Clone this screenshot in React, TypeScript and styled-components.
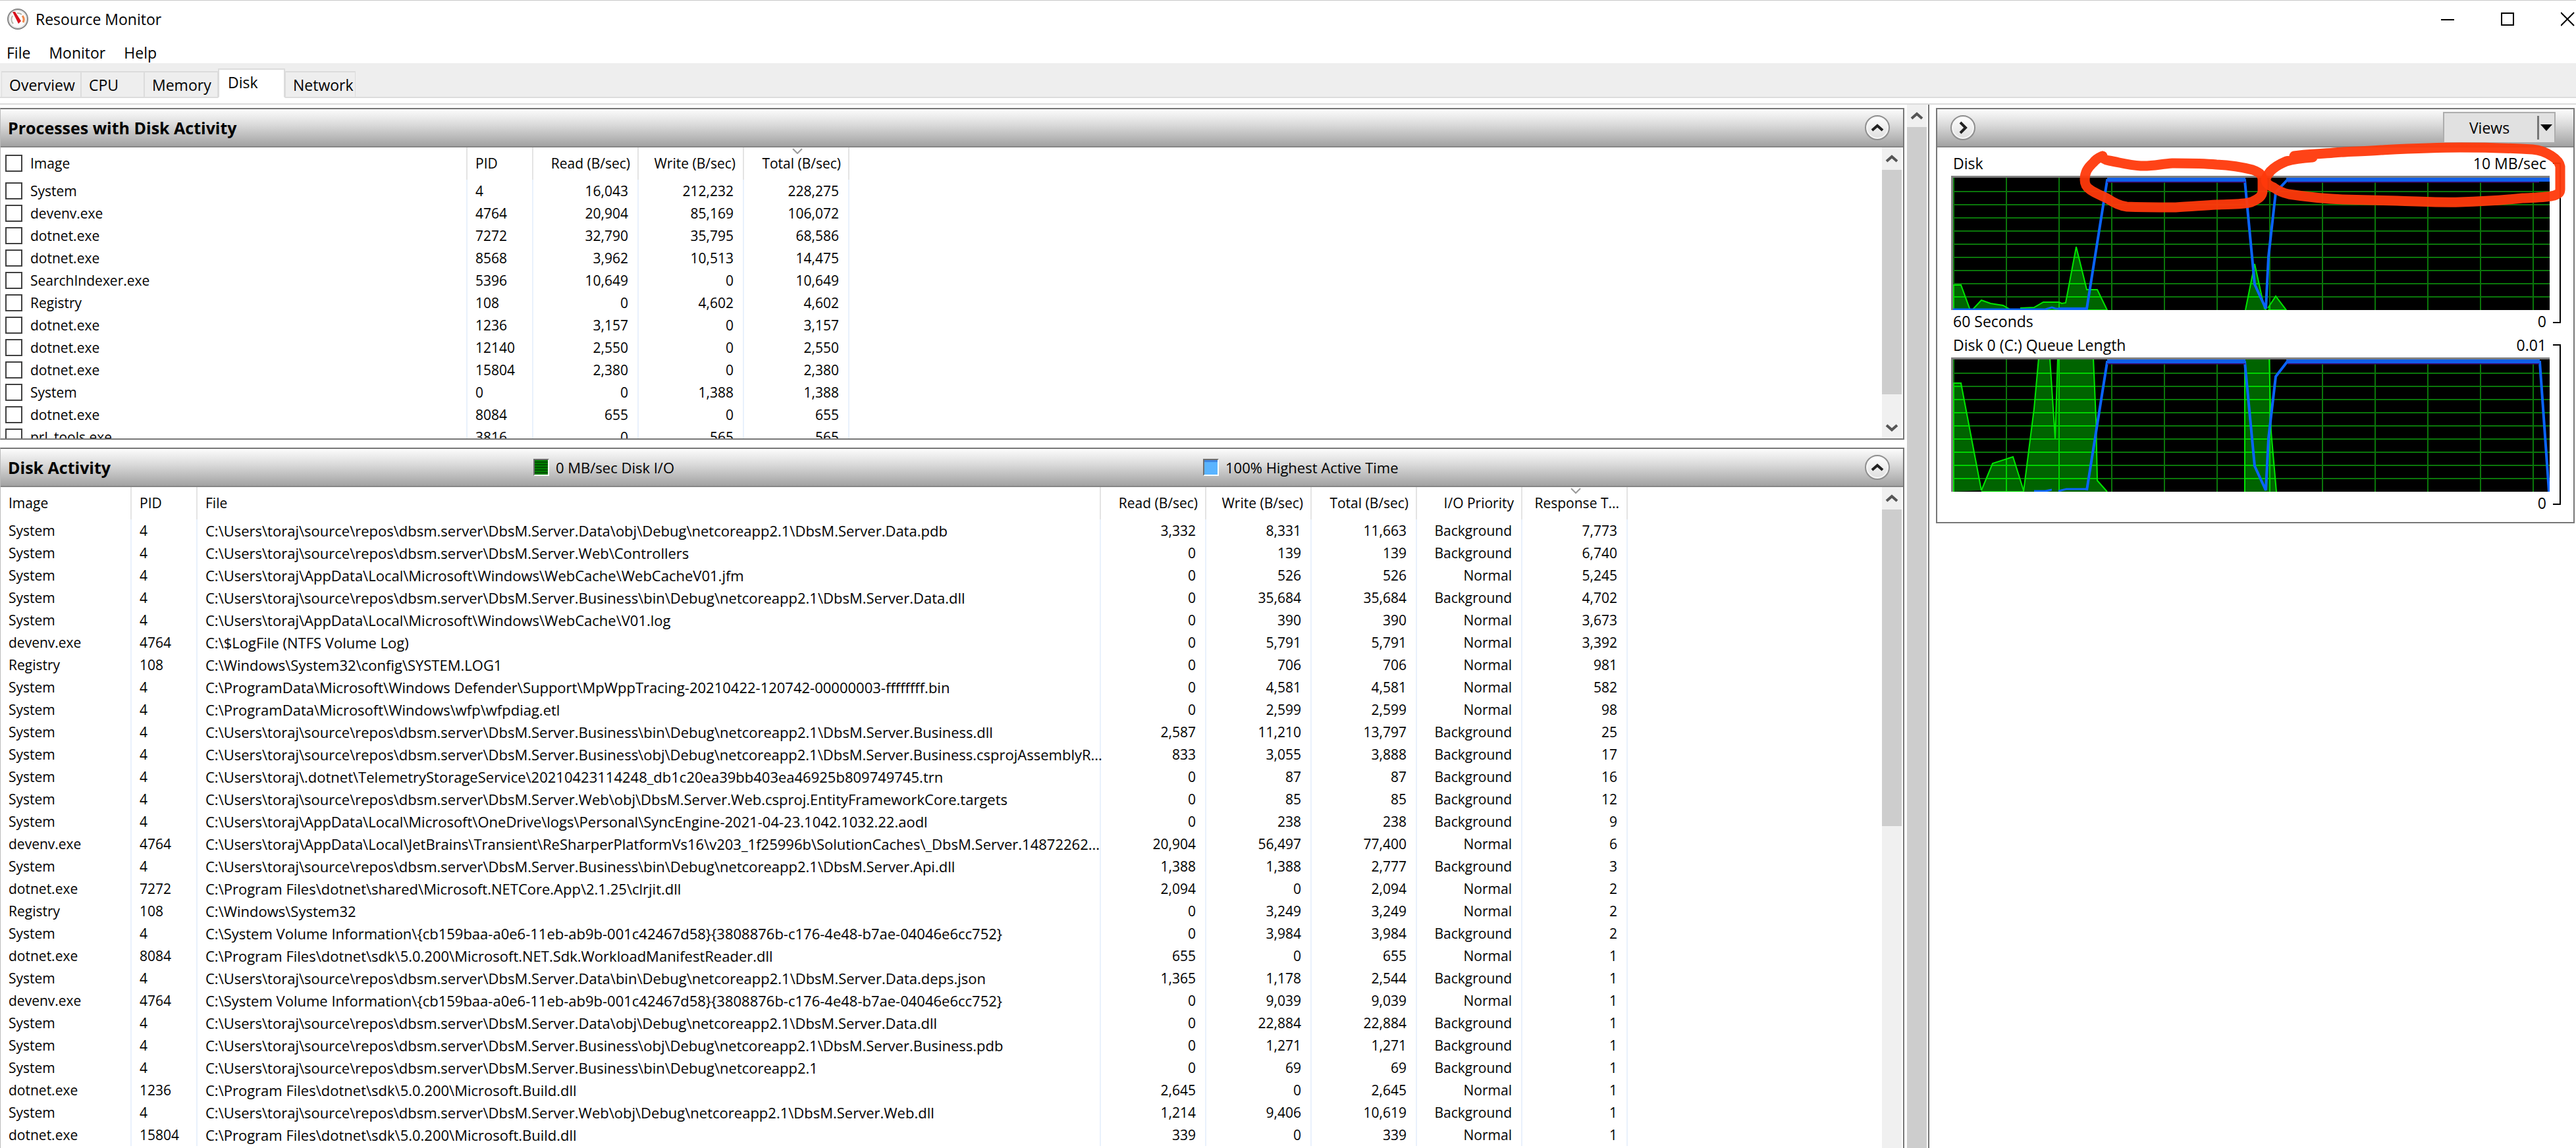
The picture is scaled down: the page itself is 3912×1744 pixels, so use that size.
import React from "react";
import styled, { createGlobalStyle } from "styled-components";

const GlobalStyle = createGlobalStyle`
  *, *::before, *::after { box-sizing: border-box; }
  body {
    margin: 0;
    background: #fff;
    color: #000;
    font-family: "Segoe UI", "Open Sans", "Noto Sans", sans-serif;
    font-size: 21px;
  }
  button { font: inherit; color: inherit; padding: 0; border: 0; background: none; }
`;

const Window = styled.div`
  display: flex;
  flex-direction: column;
  height: 100vh;
  overflow: hidden;
  border-top: 1px solid #c8c8c8;
`;

const TitleBar = styled.header`
  display: flex;
  align-items: center;
  height: 56px;
  padding: 0 2px 0 10px;
`;

const Title = styled.h1`
  flex: 1;
  margin: 0 0 0 10px;
  font-size: 23px;
  line-height: 32px;
  font-weight: 400;
`;

const WindowControls = styled.div`
  display: flex;
  gap: 70px;
`;

const ControlButton = styled.button`
  display: flex;
  width: 21px;
  height: 22px;
`;

const MenuBar = styled.nav`
  display: flex;
  gap: 28px;
  height: 39px;
  padding: 6px 10px 0;
  font-size: 23px;
  line-height: 32px;
`;

const MenuButton = styled.button`
  line-height: 32px;
`;

const TabStrip = styled.div`
  display: flex;
  align-items: flex-end;
  height: 53px;
  padding-left: 2px;
  background: #eee;
  box-shadow: inset 0 -2px #dcdcdc;
`;

const Tab = styled.button<{ $width: number; $active?: boolean }>`
  width: ${(p) => p.$width}px;
  height: ${(p) => (p.$active ? 45 : 41)}px;
  padding: ${(p) => (p.$active ? "0 0 4px 13px" : "0 0 0 11px")};
  border: 2px solid #dcdcdc;
  border-left-width: ${(p) => (p.$active ? 2 : 1)}px;
  border-right-width: ${(p) => (p.$active ? 2 : 1)}px;
  border-bottom-color: ${(p) => (p.$active ? "#fff" : "#dcdcdc")};
  background: ${(p) => (p.$active ? "#fff" : "#eee")};
  font-size: 23px;
  line-height: 32px;
  text-align: left;
  white-space: nowrap;
`;

const TabRule = styled.div`
  height: 10px;
  flex: none;
  border-bottom: 2px solid #dcdcdc;
`;

const Workspace = styled.main`
  flex: 1;
  display: flex;
  min-height: 0;
`;

const Panels = styled.div`
  flex: 1;
  min-width: 0;
  display: flex;
  flex-direction: column;
  gap: 12px;
  padding: 5px 4px 0 0;
`;

const Panel = styled.section<{ $grow?: boolean }>`
  display: flex;
  flex-direction: column;
  flex: ${(p) => (p.$grow ? "1 0 0" : "0 0 504px")};
  min-height: 0;
  border: 2px solid #777;
  border-left: 1px solid #bbb;
  border-bottom-width: ${(p) => (p.$grow ? 0 : 2)}px;
`;

const PanelHeader = styled.header`
  display: flex;
  align-items: center;
  flex: none;
  height: 58px;
  border-bottom: 2px solid #868686;
  background: linear-gradient(#fcfcfc, #dcdcdc 40%, #a2a2a2);
`;

const PanelTitle = styled.h2`
  flex: none;
  width: 809px;
  margin: 0;
  padding-left: 11px;
  font-size: 25px;
  line-height: 32px;
  font-weight: 700;
`;

const Legend = styled.span<{ $wide?: boolean }>`
  display: flex;
  align-items: center;
  flex: none;
  gap: 10px;
  width: ${(p) => (p.$wide ? "1017px" : "auto")};
  font-size: 22px;
  line-height: 32px;
`;

const Swatch = styled.span<{ $kind: "io" | "active" }>`
  width: 24px;
  height: 26px;
  border: 2px solid;
  border-color: #6e6e6e #fff #fff #6e6e6e;
  background: ${(p) =>
    p.$kind === "io"
      ? "repeating-linear-gradient(0deg, transparent 0 2px, #005000 2px 4px), #008000"
      : "linear-gradient(#3f86e0 0 3px, #5ab4ff 3px)"};
`;

const RoundButton = styled.button`
  display: flex;
  align-items: center;
  justify-content: center;
  width: 38px;
  height: 38px;
  border: 2px solid #8e8e8e;
  border-radius: 50%;
  background: linear-gradient(#fff, #dedede);
  box-shadow: inset 0 0 0 2px #f6f6f6;
`;

const CollapseButton = styled(RoundButton)`
  margin: 0 20px 0 auto;
`;

const PanelBody = styled.div`
  flex: 1;
  display: flex;
  min-height: 0;
  padding-right: 2px;
`;

const TableArea = styled.div`
  flex: 1;
  min-width: 0;
  overflow: hidden;
`;

const Table = styled.table`
  table-layout: fixed;
  width: 0;
  border-collapse: separate;
  border-spacing: 0;
`;

const HeadCell = styled.th<{ $right?: boolean }>`
  position: relative;
  height: 49px;
  padding: 0 11px 2px 12px;
  border-right: 2px solid #e4e4e4;
  font-weight: 400;
  line-height: 34px;
  text-align: ${(p) => (p.$right ? "right" : "left")};
  white-space: nowrap;
`;

const Cell = styled.td<{ $right?: boolean }>`
  height: 34px;
  padding: 0 ${(p) => (p.$right ? 14 : 8)}px 0 12px;
  border-right: 2px solid #e9f1fc;
  line-height: 34px;
  text-align: ${(p) => (p.$right ? "right" : "left")};
  white-space: nowrap;
`;

const PathCell = styled(Cell)`
  padding-right: 0;
  font-size: 22px;
`;

const SortMark = styled.svg`
  position: absolute;
  top: 1px;
  left: calc(50% - 6px);
`;

const CheckLabel = styled.label`
  display: flex;
  align-items: center;
  gap: 12px;
  margin-left: -5px;
`;

const CheckBox = styled.input`
  appearance: none;
  flex: none;
  width: 26px;
  height: 26px;
  margin: 0;
  border: 2px solid #404040;
  background: #fff;
`;

const ScrollTrack = styled.div`
  display: flex;
  flex-direction: column;
  flex: none;
  width: 30px;
  background: #f0f0f0;
`;

const ScrollButton = styled.button`
  display: flex;
  align-items: center;
  justify-content: center;
  flex: none;
  height: 34px;
`;

const ScrollThumb = styled.div<{ $size: string }>`
  flex: 0 0 ${(p) => p.$size};
  background: #cdcdcd;
`;

const ScrollSpace = styled.div`
  flex: 1;
`;

const Sidebar = styled.aside`
  flex: 0 0 984px;
  margin-left: 2px;
  padding: 5px 2px 0 10px;
  border-left: 2px solid #777;
`;

const GraphPanel = styled.section`
  position: relative;
  border: 2px solid #777;
  padding-bottom: 10px;
`;

const GraphHeader = styled(PanelHeader)`
  justify-content: space-between;
  padding: 0 27px 0 20px;
`;

const ViewsButton = styled.button`
  display: flex;
  align-items: center;
  width: 171px;
  height: 48px;
  border: 2px solid #adadad;
  background: #e1e1e1;
  font-size: 23px;
  line-height: 32px;
`;

const ViewsText = styled.span`
  flex: 1;
  padding-right: 4px;
  text-align: center;
`;

const ViewsArrow = styled.span`
  display: flex;
  align-items: center;
  height: 36px;
  padding: 0 3px 0 2px;
  border-left: 3px solid #777;
`;

const Graph = styled.figure`
  display: grid;
  grid-template-columns: 1fr 12px;
  column-gap: 5px;
  margin: 0;
  padding: 0 19px 0 21px;
  font-size: 23px;
`;

const GraphColumn = styled.div`
  min-width: 0;
`;

const GraphCaption = styled.div<{ $tall?: boolean }>`
  display: flex;
  justify-content: space-between;
  padding: ${(p) => (p.$tall ? "8px 5px 3px 3px" : "1px 5px 3px 3px")};
  line-height: 32px;
`;

const Plot = styled.svg`
  display: block;
  width: 100%;
  height: 204px;
  background: #000;
  border-left: 3px solid #808080;
  border-top: 3px solid #808080;
`;

const Bracket = styled.div<{ $tall?: boolean }>`
  margin: ${(p) => (p.$tall ? "23px 0 16px" : "16px 0 16px")};
  border: 2px solid #000;
  border-left: 0;
`;

const Annotation = styled.svg`
  position: absolute;
  top: 46px;
  right: 0;
  pointer-events: none;
`;

type Direction = "up" | "down" | "right";

const turn: Record<Direction, string> = {
  up: "M2 10 L10 3 L18 10",
  down: "M2 3 L10 10 L18 3",
  right: "M6 -2 L14 6 L6 14",
};

function Chevron({ dir, color = "#555" }: { dir: Direction; color?: string }) {
  return (
    <svg width="20" height="20" viewBox="0 -4 20 20" aria-hidden="true">
      <path d={turn[dir]} fill="none" stroke={color} strokeWidth="4" />
    </svg>
  );
}

function Scrollbar({ thumb, end = true }: { thumb: string; end?: boolean }) {
  return (
    <ScrollTrack>
      <ScrollButton aria-label="Scroll up">
        <Chevron dir="up" />
      </ScrollButton>
      <ScrollThumb $size={thumb} />
      <ScrollSpace />
      {end && (
        <ScrollButton aria-label="Scroll down">
          <Chevron dir="down" />
        </ScrollButton>
      )}
    </ScrollTrack>
  );
}

function Sort() {
  return (
    <SortMark width="16" height="9" viewBox="0 0 16 9" aria-hidden="true">
      <path d="M1 1 L8 8 L15 1" fill="none" stroke="#999" strokeWidth="2" />
    </SortMark>
  );
}

const processes = [
  ["System", "4", "16,043", "212,232", "228,275"],
  ["devenv.exe", "4764", "20,904", "85,169", "106,072"],
  ["dotnet.exe", "7272", "32,790", "35,795", "68,586"],
  ["dotnet.exe", "8568", "3,962", "10,513", "14,475"],
  ["SearchIndexer.exe", "5396", "10,649", "0", "10,649"],
  ["Registry", "108", "0", "4,602", "4,602"],
  ["dotnet.exe", "1236", "3,157", "0", "3,157"],
  ["dotnet.exe", "12140", "2,550", "0", "2,550"],
  ["dotnet.exe", "15804", "2,380", "0", "2,380"],
  ["System", "0", "0", "1,388", "1,388"],
  ["dotnet.exe", "8084", "655", "0", "655"],
  ["prl_tools.exe", "3816", "0", "565", "565"],
];

const B = "Background";
const N = "Normal";
const repo = "C:\\Users\\toraj\\source\\repos\\dbsm.server\\";
const appData = "C:\\Users\\toraj\\AppData\\Local\\";
const volume = "C:\\System Volume Information\\{cb159baa-a0e6-11eb-ab9b-001c42467d58}{3808876b-c176-4e48-b7ae-04046e6cc752}";

const activity = [
  ["System", "4", repo + "DbsM.Server.Data\\obj\\Debug\\netcoreapp2.1\\DbsM.Server.Data.pdb", "3,332", "8,331", "11,663", B, "7,773"],
  ["System", "4", repo + "DbsM.Server.Web\\Controllers", "0", "139", "139", B, "6,740"],
  ["System", "4", appData + "Microsoft\\Windows\\WebCache\\WebCacheV01.jfm", "0", "526", "526", N, "5,245"],
  ["System", "4", repo + "DbsM.Server.Business\\bin\\Debug\\netcoreapp2.1\\DbsM.Server.Data.dll", "0", "35,684", "35,684", B, "4,702"],
  ["System", "4", appData + "Microsoft\\Windows\\WebCache\\V01.log", "0", "390", "390", N, "3,673"],
  ["devenv.exe", "4764", "C:\\$LogFile (NTFS Volume Log)", "0", "5,791", "5,791", N, "3,392"],
  ["Registry", "108", "C:\\Windows\\System32\\config\\SYSTEM.LOG1", "0", "706", "706", N, "981"],
  ["System", "4", "C:\\ProgramData\\Microsoft\\Windows Defender\\Support\\MpWppTracing-20210422-120742-00000003-ffffffff.bin", "0", "4,581", "4,581", N, "582"],
  ["System", "4", "C:\\ProgramData\\Microsoft\\Windows\\wfp\\wfpdiag.etl", "0", "2,599", "2,599", N, "98"],
  ["System", "4", repo + "DbsM.Server.Business\\bin\\Debug\\netcoreapp2.1\\DbsM.Server.Business.dll", "2,587", "11,210", "13,797", B, "25"],
  ["System", "4", repo + "DbsM.Server.Business\\obj\\Debug\\netcoreapp2.1\\DbsM.Server.Business.csprojAssemblyR...", "833", "3,055", "3,888", B, "17"],
  ["System", "4", "C:\\Users\\toraj\\.dotnet\\TelemetryStorageService\\20210423114248_db1c20ea39bb403ea46925b809749745.trn", "0", "87", "87", B, "16"],
  ["System", "4", repo + "DbsM.Server.Web\\obj\\DbsM.Server.Web.csproj.EntityFrameworkCore.targets", "0", "85", "85", B, "12"],
  ["System", "4", appData + "Microsoft\\OneDrive\\logs\\Personal\\SyncEngine-2021-04-23.1042.1032.22.aodl", "0", "238", "238", B, "9"],
  ["devenv.exe", "4764", appData + "JetBrains\\Transient\\ReSharperPlatformVs16\\v203_1f25996b\\SolutionCaches\\_DbsM.Server.14872262...", "20,904", "56,497", "77,400", N, "6"],
  ["System", "4", repo + "DbsM.Server.Business\\bin\\Debug\\netcoreapp2.1\\DbsM.Server.Api.dll", "1,388", "1,388", "2,777", B, "3"],
  ["dotnet.exe", "7272", "C:\\Program Files\\dotnet\\shared\\Microsoft.NETCore.App\\2.1.25\\clrjit.dll", "2,094", "0", "2,094", N, "2"],
  ["Registry", "108", "C:\\Windows\\System32", "0", "3,249", "3,249", N, "2"],
  ["System", "4", volume, "0", "3,984", "3,984", B, "2"],
  ["dotnet.exe", "8084", "C:\\Program Files\\dotnet\\sdk\\5.0.200\\Microsoft.NET.Sdk.WorkloadManifestReader.dll", "655", "0", "655", N, "1"],
  ["System", "4", repo + "DbsM.Server.Data\\bin\\Debug\\netcoreapp2.1\\DbsM.Server.Data.deps.json", "1,365", "1,178", "2,544", B, "1"],
  ["devenv.exe", "4764", volume, "0", "9,039", "9,039", N, "1"],
  ["System", "4", repo + "DbsM.Server.Data\\obj\\Debug\\netcoreapp2.1\\DbsM.Server.Data.dll", "0", "22,884", "22,884", B, "1"],
  ["System", "4", repo + "DbsM.Server.Business\\obj\\Debug\\netcoreapp2.1\\DbsM.Server.Business.pdb", "0", "1,271", "1,271", B, "1"],
  ["System", "4", repo + "DbsM.Server.Business\\bin\\Debug\\netcoreapp2.1", "0", "69", "69", B, "1"],
  ["dotnet.exe", "1236", "C:\\Program Files\\dotnet\\sdk\\5.0.200\\Microsoft.Build.dll", "2,645", "0", "2,645", N, "1"],
  ["System", "4", repo + "DbsM.Server.Web\\obj\\Debug\\netcoreapp2.1\\DbsM.Server.Web.dll", "1,214", "9,406", "10,619", B, "1"],
  ["dotnet.exe", "15804", "C:\\Program Files\\dotnet\\sdk\\5.0.200\\Microsoft.Build.dll", "339", "0", "339", N, "1"],
];

function Columns({ widths }: { widths: number[] }) {
  return (
    <colgroup>
      {widths.map((width, i) => (
        <col key={i} style={{ width }} />
      ))}
    </colgroup>
  );
}

const gridX = Array.from({ length: 12 }, (_, i) => 1 + i * 80);
const gridY = Array.from({ length: 9 }, (_, i) => 21 + i * 20);

function GridLines({ color }: { color: string }) {
  return (
    <g stroke={color} strokeWidth="2">
      {gridX.map((x) => (
        <line key={"x" + x} x1={x} x2={x} y1="0" y2="201" />
      ))}
      {gridY.map((y) => (
        <line key={"y" + y} x1="0" x2="906" y1={y} y2={y} />
      ))}
    </g>
  );
}

function History({ id, label, areas, line, base }: { id: string; label: string; areas: string[]; line: string; base: string }) {
  return (
    <Plot viewBox="0 0 906 201" preserveAspectRatio="none" role="img" aria-label={label}>
      <defs>
        <clipPath id={id}>
          {areas.map((d) => (
            <path key={d} d={d + " Z"} />
          ))}
        </clipPath>
      </defs>
      <GridLines color="#0a760a" />
      <g clipPath={`url(#${id})`}>
        <rect width="906" height="201" fill="#006400" />
        <GridLines color="#00d200" />
      </g>
      {areas.map((d) => (
        <path key={d} d={d} fill="none" stroke="#00e600" strokeWidth="2" />
      ))}
      <path d={base} fill="none" stroke="#0a64ff" strokeWidth="3" />
      <path d={line} fill="none" stroke="#0a64ff" strokeWidth="4" />
      <path d="M234 5 H444 M508 5 H890" fill="none" stroke="#400070" strokeWidth="5" />
      <path d={id === "disk-area" ? "M234 3 H444 M506 3 H906" : "M234 3 H444 M506 3 H891"} fill="none" stroke="#0f5fe8" strokeWidth="6" />
    </Plot>
  );
}

const diskAreas = [
  "M0 201 L0 163 L12 163 L26 201",
  "M29 201 L43 186 L57 191 L76 194 L88 201",
  "M102 198 L123 197 L137 189 L161 189 L165 191 L171 190 L187 105 L203 170 L219 170 L234 201 L102 201",
  "M444 201 L458 131 L473 199 L476 201",
  "M478 198 L490 180 L506 201 L478 201",
];

const queueAreas = [
  "M0 201 L0 36 L12 36 L43 199",
  "M43 199 L60 158 L91 148 L107 199 L107 201 L43 201",
  "M107 201 L123 75 L130 -2 L147 -2 L155 120 L159 -2 L213 -2 L217 90 L219 184 L234 201",
  "M443 201 L443 -2 L480 -2 L483 110 L491 201",
];

function App() {
  return (
    <>
      <GlobalStyle />
      <Window>
        <TitleBar>
          <svg width="34" height="34" viewBox="0 0 34 34" aria-hidden="true">
            <circle cx="17" cy="17" r="15" fill="#f4f4f4" stroke="#858585" strokeWidth="2" />
            <circle cx="17" cy="17" r="13" fill="#fbfbfb" stroke="#dadada" strokeWidth="1" />
            <path d="M10 24 A10 10 0 0 1 9 12 M16 8 A9 9 0 0 1 23 10" fill="none" stroke="#b4b4a8" strokeWidth="2" />
            <path d="M24 12 A9 9 0 0 1 25 22" fill="none" stroke="#f0884a" strokeWidth="3" />
            <path d="M9 6 L13 6 L22 20 L18 24 Z" fill="#d8101c" />
          </svg>
          <Title>Resource Monitor</Title>
          <WindowControls>
            <ControlButton aria-label="Minimize">
              <svg width="21" height="22"><path d="M0 12 H20" stroke="#000" strokeWidth="2" /></svg>
            </ControlButton>
            <ControlButton aria-label="Maximize">
              <svg width="21" height="22"><rect x="1" y="2" width="18" height="18" fill="none" stroke="#000" strokeWidth="2" /></svg>
            </ControlButton>
            <ControlButton aria-label="Close">
              <svg width="21" height="22"><path d="M0 1 L20 21 M20 1 L0 21" stroke="#000" strokeWidth="2" /></svg>
            </ControlButton>
          </WindowControls>
        </TitleBar>
        <MenuBar>
          <MenuButton>File</MenuButton>
          <MenuButton>Monitor</MenuButton>
          <MenuButton>Help</MenuButton>
        </MenuBar>
        <TabStrip role="tablist">
          <Tab role="tab" $width={121}>Overview</Tab>
          <Tab role="tab" $width={96}>CPU</Tab>
          <Tab role="tab" $width={112}>Memory</Tab>
          <Tab role="tab" $width={102} $active aria-selected="true">Disk</Tab>
          <Tab role="tab" $width={107}>Network</Tab>
        </TabStrip>
        <TabRule />
        <Workspace>
          <Panels>
            <Panel>
              <PanelHeader>
                <PanelTitle>Processes with Disk Activity</PanelTitle>
                <CollapseButton aria-label="Collapse">
                  <Chevron dir="up" color="#222" />
                </CollapseButton>
              </PanelHeader>
              <PanelBody>
                <TableArea>
                  <Table>
                    <Columns widths={[709, 100, 160, 160, 160]} />
                    <thead>
                      <tr>
                        <HeadCell>
                          <CheckLabel><CheckBox type="checkbox" />Image</CheckLabel>
                        </HeadCell>
                        <HeadCell>PID</HeadCell>
                        <HeadCell $right>Read (B/sec)</HeadCell>
                        <HeadCell $right>Write (B/sec)</HeadCell>
                        <HeadCell $right>Total (B/sec)<Sort /></HeadCell>
                      </tr>
                    </thead>
                    <tbody>
                      {processes.map((row) => (
                        <tr key={row[1]}>
                          <Cell>
                            <CheckLabel><CheckBox type="checkbox" />{row[0]}</CheckLabel>
                          </Cell>
                          {row.slice(1).map((value, i) => (
                            <Cell key={i} $right={i > 0}>{value}</Cell>
                          ))}
                        </tr>
                      ))}
                    </tbody>
                  </Table>
                </TableArea>
                <Scrollbar thumb="341px" />
              </PanelBody>
            </Panel>
            <Panel $grow>
              <PanelHeader>
                <PanelTitle>Disk Activity</PanelTitle>
                <Legend $wide><Swatch $kind="io" />0 MB/sec Disk I/O</Legend>
                <Legend><Swatch $kind="active" />100% Highest Active Time</Legend>
                <CollapseButton aria-label="Collapse">
                  <Chevron dir="up" color="#222" />
                </CollapseButton>
              </PanelHeader>
              <PanelBody>
                <TableArea>
                  <Table>
                    <Columns widths={[199, 100, 1372, 160, 160, 160, 160, 160]} />
                    <thead>
                      <tr>
                        <HeadCell>Image</HeadCell>
                        <HeadCell>PID</HeadCell>
                        <HeadCell>File</HeadCell>
                        <HeadCell $right>Read (B/sec)</HeadCell>
                        <HeadCell $right>Write (B/sec)</HeadCell>
                        <HeadCell $right>Total (B/sec)</HeadCell>
                        <HeadCell $right>I/O Priority</HeadCell>
                        <HeadCell $right>Response T...<Sort /></HeadCell>
                      </tr>
                    </thead>
                    <tbody>
                      {activity.map(([image, pid, file, ...values], r) => (
                        <tr key={r}>
                          <Cell>{image}</Cell>
                          <Cell>{pid}</Cell>
                          <PathCell>{file}</PathCell>
                          {values.map((value, i) => (
                            <Cell key={i} $right>{value}</Cell>
                          ))}
                        </tr>
                      ))}
                    </tbody>
                  </Table>
                </TableArea>
                <Scrollbar thumb="481px" end={false} />
              </PanelBody>
            </Panel>
          </Panels>
          <Scrollbar thumb="calc(100% - 34px)" end={false} />
          <Sidebar>
            <GraphPanel>
              <GraphHeader>
                <RoundButton aria-label="Hide graphs">
                  <Chevron dir="right" color="#222" />
                </RoundButton>
                <ViewsButton>
                  <ViewsText>Views</ViewsText>
                  <ViewsArrow>
                    <svg width="18" height="10" aria-hidden="true"><path d="M0 0 H18 L9 10 Z" /></svg>
                  </ViewsArrow>
                </ViewsButton>
              </GraphHeader>
              <Graph>
                <GraphColumn>
                  <GraphCaption $tall><span>Disk</span><span>10 MB/sec</span></GraphCaption>
                  <History
                    id="disk-area"
                    label="Disk"
                    areas={diskAreas}
                    base="M0 200 H140 L150 197 L156 199 H204"
                    line="M160 199 H203 L234 4 H443 L458 162 L475 199 L479 120 L490 22 L507 4 H906"
                  />
                  <GraphCaption><span>60 Seconds</span><span>0</span></GraphCaption>
                </GraphColumn>
                <Bracket $tall />
              </Graph>
              <Graph>
                <GraphColumn>
                  <GraphCaption><span>Disk 0 (C:) Queue Length</span><span>0.01</span></GraphCaption>
                  <History
                    id="queue-area"
                    label="Disk 0 (C:) Queue Length"
                    areas={queueAreas}
                    base="M123 200 H140 L150 198 M160 200 L172 197 H204"
                    line="M203 199 L234 4 H443 L458 162 L475 199 L479 120 L490 26 L507 4 H891 L905 201"
                  />
                  <GraphCaption><span /><span>0</span></GraphCaption>
                </GraphColumn>
                <Bracket />
              </Graph>
              <Annotation width="762" height="112" viewBox="0 0 762 112" fill="none" stroke="#ff390b" strokeOpacity="0.95" strokeWidth="15" strokeLinecap="round" strokeLinejoin="round">
                <path d="M47 25 C40 28 36 31 33 35 C24 43 20 50 20 61 C20 68 22 72 28 76 C36 82 46 85 55 90 C64 96 74 101 84 102 C108 103 134 103 158 103 C180 102 200 100 220 99 C240 98 260 99 273 95 C284 90 290 86 290 78 V61 C290 53 284 49 275 46 C256 41 240 39 220 38 C198 36 176 36 153 36 C136 37 122 41 105 40 C86 39 74 35 57 32 C50 31 46 28 47 25" />
                <path d="M366 27 C350 28 336 30 326 33 C314 38 307 43 302 48 C298 53 295 57 295 61 C295 67 300 70 307 73 C314 78 320 81 330 83 C356 87 386 90 412 91 L494 93 C530 94 560 96 590 95 C626 94 656 92 685 89 C704 88 722 88 733 85 C741 82 742 80 742 75 V41 C741 35 737 30 729 25 C720 19 712 16 700 15 C664 13 626 12 590 12 C548 12 510 14 470 16 C446 18 420 18 398 20 C376 22 356 22 338 25" />
              </Annotation>
            </GraphPanel>
          </Sidebar>
        </Workspace>
      </Window>
    </>
  );
}

export default App;
